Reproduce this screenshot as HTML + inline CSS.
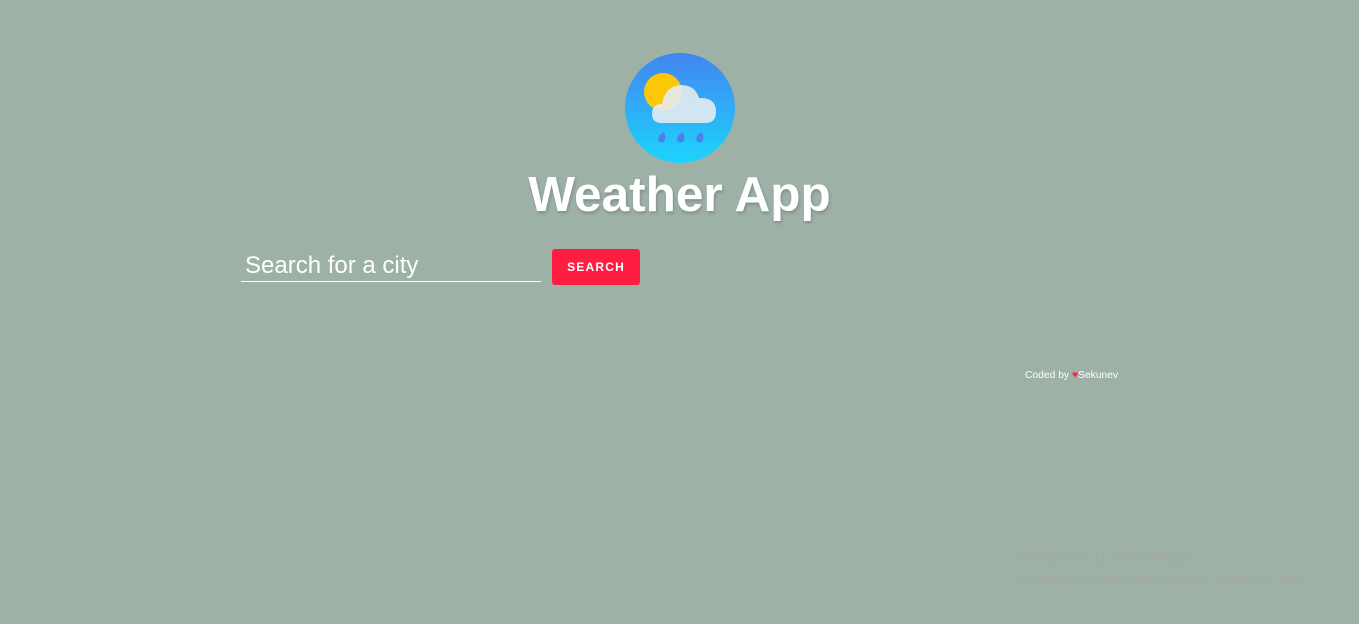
<!DOCTYPE html>
<html><head><meta charset="utf-8"><style>
html,body{margin:0;padding:0;width:1359px;height:624px;background:#9db1a7;overflow:hidden;font-family:"Liberation Sans",Arial,sans-serif;position:relative}
.logo{position:absolute;left:625px;top:53px;width:110px;height:110px}
h1{position:absolute;left:0;width:1359px;top:166px;margin:0;text-align:center;color:#fff;font-size:49.5px;font-weight:bold;text-shadow:1px 2px 3px rgba(0,0,0,.2)}
.inp{position:absolute;left:241px;top:250px;width:300px;height:32px;border-bottom:1px solid #fff;color:#fff;font-size:24px;line-height:31px;padding-left:4px;box-sizing:border-box}
.btn{position:absolute;left:552px;top:249px;width:88px;height:36px;background:#ff1e42;border-radius:3px;color:#fff;font-size:12px;font-weight:bold;letter-spacing:1.2px;text-align:center;line-height:36px}
.coded{position:absolute;left:1025px;top:370px;color:#fff;font-size:10.3px}
.coded span{color:#ff1e42}
.win1{position:absolute;left:1012px;top:547px;color:#a4aaa4;font-size:19.5px}
.win2{position:absolute;left:1012px;top:571px;color:#a4aaa4;font-size:15.2px}
</style></head><body>
<svg class="logo" viewBox="0 0 110 110">
<defs><linearGradient id="g" x1="0" y1="0" x2="0" y2="1"><stop offset="0" stop-color="#4385f0"/><stop offset="1" stop-color="#1cd4fd"/></linearGradient></defs>
<circle cx="55" cy="55" r="55" fill="url(#g)"/>
<circle cx="38" cy="39" r="19" fill="#fcc708"/>
<g fill="#e4ebf1" opacity=".9">
<path d="M37 70 Q27 70 27 61 Q27 51 37 51 Q40 33 56 32 Q70 32 74 45 Q91 44 91 59 Q91 70 80 70 Z"/>
</g>
<path d="M33 86 a3.6 3.6 0 0 0 7 1 q1-4 -1-8 q-5 2 -6 7z M52 86 a3.6 3.6 0 0 0 7 1 q1-4 -1-8 q-5 2 -6 7z M71 86 a3.6 3.6 0 0 0 7 1 q1-4 -1-8 q-5 2 -6 7z" fill="#4a80ec"/>
</svg>
<h1>Weather App</h1>
<div class="inp">Search for a city</div>
<div class="btn">SEARCH</div>
<div class="coded">Coded by <span>♥</span>Sekunev</div>
<div class="win1">Windows'u Etkinleştir</div>
<div class="win2">Windows'u etkinleştirmek için Ayarlar'a gidin.</div>
</body></html>
